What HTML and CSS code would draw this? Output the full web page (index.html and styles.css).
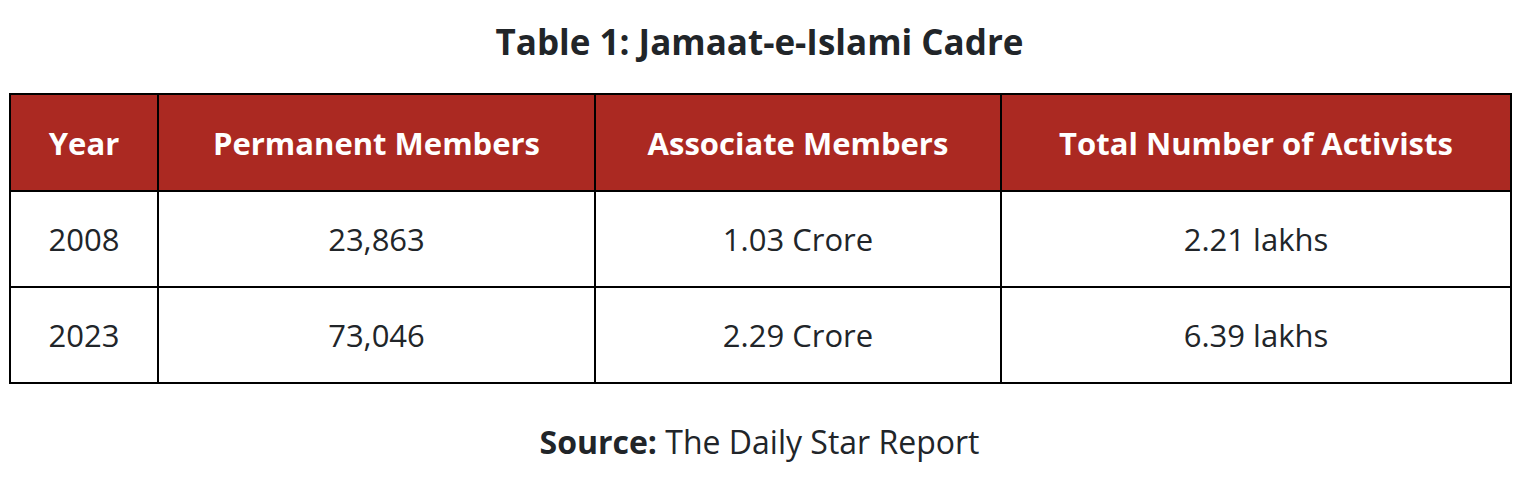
FILE: index.html
```html
<!DOCTYPE html>
<html lang="en">
<head>
<meta charset="utf-8">
<title>Table 1: Jamaat-e-Islami Cadre</title>
<link rel="stylesheet" href="styles.css">
</head>
<body>
<div class="page">
  <h2 class="caption">Table 1: Jamaat-e-Islami Cadre</h2>
  <table class="data">
    <colgroup>
      <col class="c1"><col class="c2"><col class="c3"><col class="c4">
    </colgroup>
    <thead>
      <tr>
        <th>Year</th>
        <th>Permanent Members</th>
        <th>Associate Members</th>
        <th>Total Number of Activists</th>
      </tr>
    </thead>
    <tbody>
      <tr>
        <td>2008</td>
        <td>23,863</td>
        <td>1.03 Crore</td>
        <td>2.21 lakhs</td>
      </tr>
      <tr>
        <td>2023</td>
        <td>73,046</td>
        <td>2.29 Crore</td>
        <td>6.39 lakhs</td>
      </tr>
    </tbody>
  </table>
  <p class="source"><strong>Source:</strong> The Daily Star Report</p>
</div>
</body>
</html>
```

FILE: styles.css
```css
html, body {
  margin: 0;
  padding: 0;
  background: #ffffff;
}

body {
  font-family: "Open Sans", "Noto Sans", "Liberation Sans", sans-serif;
  color: #212529;
}

.page {
  padding: 0 8px 0 9px;
  display: flex;
  flex-direction: column;
  align-items: stretch;
}

.caption {
  margin: 22px 0 0;
  font-size: 35px;
  line-height: 40px;
  font-weight: 700;
  text-align: center;
  color: #212529;
}

.data {
  margin-top: 31px;
  width: 1501px;
  border-collapse: collapse;
  table-layout: fixed;
  border: 2px solid #000;
}

.c1 { width: 148px; }
.c2 { width: 437px; }
.c3 { width: 406px; }
.c4 { width: 510px; }

.data th,
.data td {
  border: 2px solid #000;
  text-align: center;
  vertical-align: middle;
  line-height: 40px;
  padding: 0 10px;
}

.data th {
  background: #ab2922;
  color: #ffffff;
  font-weight: 700;
  font-size: 31px;
  height: 95px;
}

.data td {
  height: 94px;
  color: #212529;
  font-weight: 400;
  font-size: 31px;
}

.source {
  margin: 38px 0 0;
  font-size: 32px;
  line-height: 40px;
  text-align: center;
  color: #212529;
}

.source strong {
  font-weight: 700;
}
```
